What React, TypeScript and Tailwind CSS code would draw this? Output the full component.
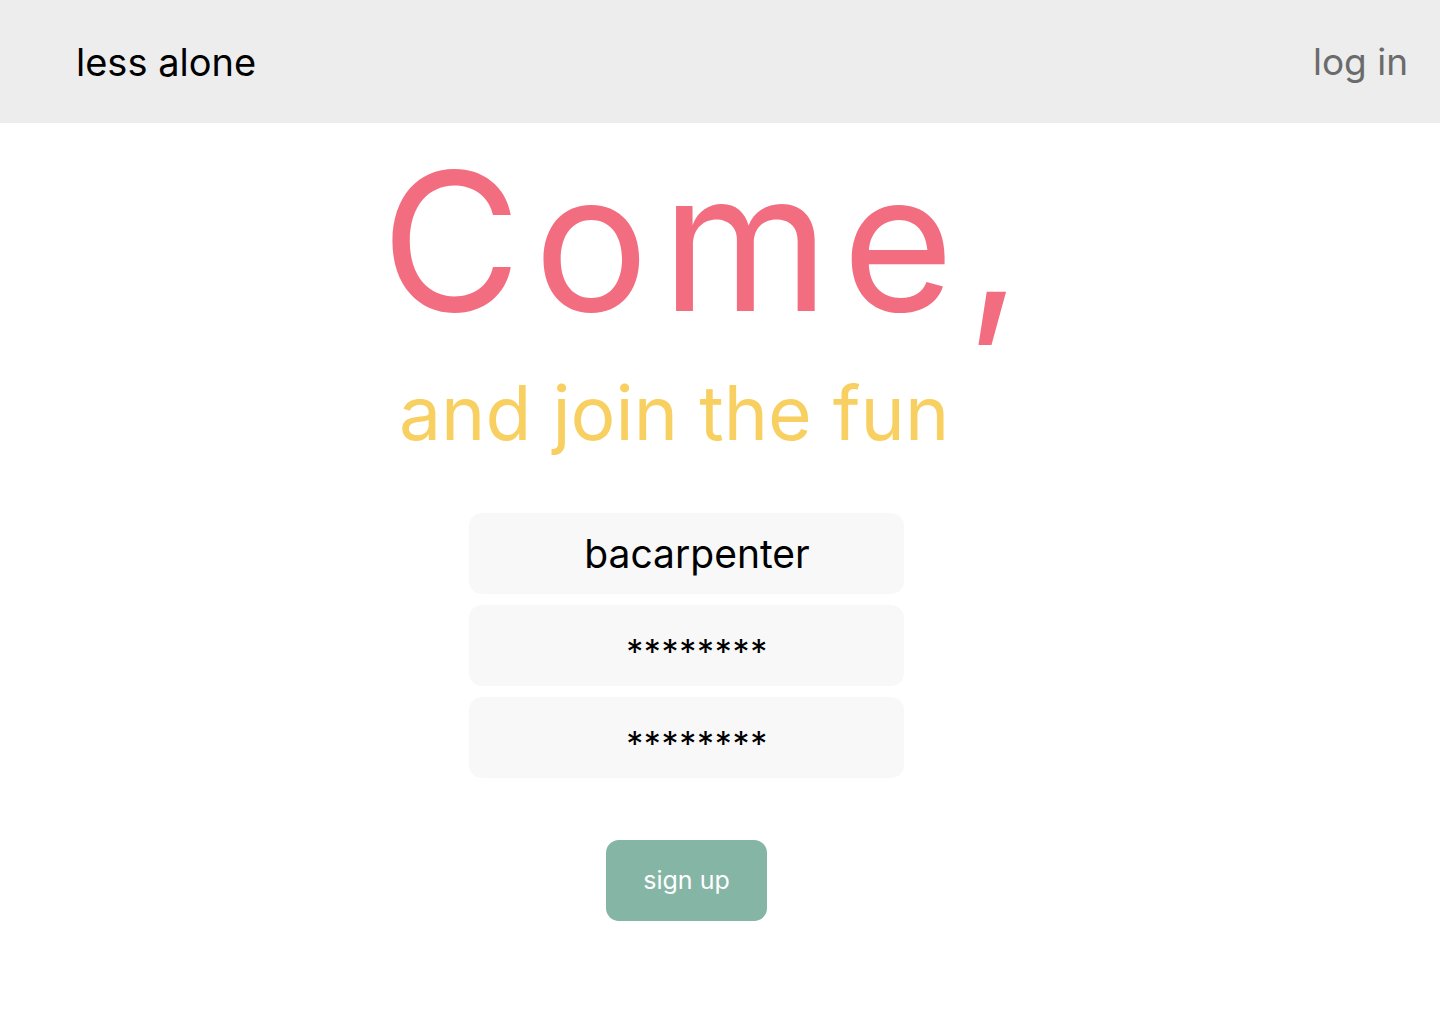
const font = { fontFamily: '"Inter", "Noto Sans", sans-serif' }

function Field({ value, masked }: { value: string; masked?: boolean }) {
  return (
    <div className="flex h-[81px] w-[435px] items-center justify-center rounded-[13px] bg-[#f8f8f8] pl-[21px]">
      {masked ? (
        <span className="translate-y-[6px] text-[34px] leading-none tracking-[0.02em] text-black">{value}</span>
      ) : (
        <span className="text-[39px] leading-none text-black">{value}</span>
      )}
    </div>
  )
}

export default function App() {
  return (
    <div className="min-h-screen bg-white" style={font}>
      <header className="flex h-[123px] items-center justify-between bg-[#ededed] pl-[76px] pr-[32px]">
        <span className="text-[38px] leading-none text-black">less alone</span>
        <span className="text-[37px] leading-none text-[#6b6b6b]">log in</span>
      </header>

      <main className="flex flex-col">
        <div className="flex flex-col pl-[381px] pt-[22px]">
          <h1 className="text-[192px] font-normal leading-none tracking-[0.065em] text-[#f36d80]">Come,</h1>
          <h2 className="mt-[38px] pl-[18px] text-[75px] font-normal leading-none text-[#f8d062]">
            and join the fun
          </h2>
        </div>

        <form className="ml-[469px] mt-[63px] flex w-[435px] flex-col gap-[11px]">
          <Field value="bacarpenter" />
          <Field value="********" masked />
          <Field value="********" masked />
          <button
            type="button"
            className="mx-auto mt-[51px] flex h-[81px] w-[161px] items-center justify-center rounded-[13px] bg-[#84b5a5] text-[25px] leading-none text-white"
          >
            sign up
          </button>
        </form>
      </main>
    </div>
  )
}
